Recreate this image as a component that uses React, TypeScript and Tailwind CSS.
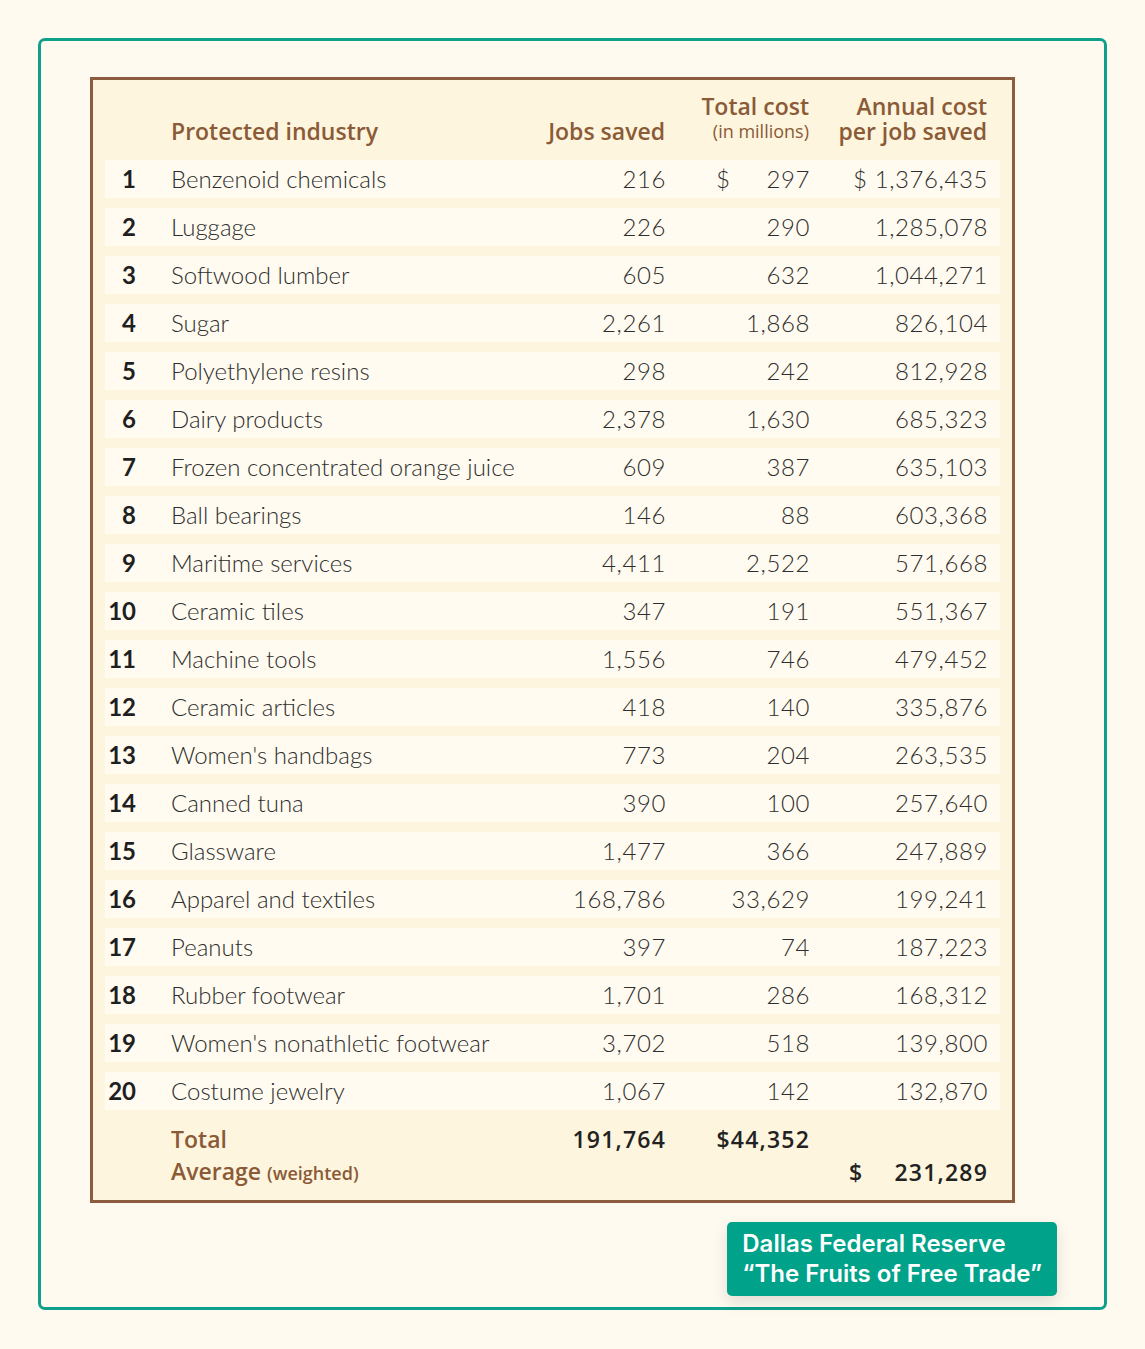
const rows: [string, string, string, string][] = [
    ["Benzenoid chemicals", "216", "297", "$ 1,376,435"],
    ["Luggage", "226", "290", "1,285,078"],
    ["Softwood lumber", "605", "632", "1,044,271"],
    ["Sugar", "2,261", "1,868", "826,104"],
    ["Polyethylene resins", "298", "242", "812,928"],
    ["Dairy products", "2,378", "1,630", "685,323"],
    ["Frozen concentrated orange juice", "609", "387", "635,103"],
    ["Ball bearings", "146", "88", "603,368"],
    ["Maritime services", "4,411", "2,522", "571,668"],
    ["Ceramic tiles", "347", "191", "551,367"],
    ["Machine tools", "1,556", "746", "479,452"],
    ["Ceramic articles", "418", "140", "335,876"],
    ["Women's handbags", "773", "204", "263,535"],
    ["Canned tuna", "390", "100", "257,640"],
    ["Glassware", "1,477", "366", "247,889"],
    ["Apparel and textiles", "168,786", "33,629", "199,241"],
    ["Peanuts", "397", "74", "187,223"],
    ["Rubber footwear", "1,701", "286", "168,312"],
    ["Women's nonathletic footwear", "3,702", "518", "139,800"],
    ["Costume jewelry", "1,067", "142", "132,870"],
];

// number | industry | jobs saved | total cost | annual cost
const cols = "grid grid-cols-[31px_379px_150px_144px_178px]";

function DataRow({ index, row }: { index: number; row: [string, string, string, string] }) {
    const [industry, jobs, total, annual] = row;
    return (
        <div className={`${cols} mb-[10px] h-[38px] items-center bg-[#fffbf0] text-[24px] text-[#2e2e2e]`}>
            <div className="text-right font-bold text-[#1f1f1f]">{index + 1}</div>
            <div className="pl-[35px] font-light whitespace-nowrap">{industry}</div>
            <div className="mr-[-1px] text-right font-light tracking-[0.6px]">{jobs}</div>
            {index === 0 ? (
                <div className="mr-[-1px] flex justify-between pl-[51px] font-light tracking-[0.6px]">
                    <span>$</span>
                    <span>{total}</span>
                </div>
            ) : (
                <div className="mr-[-1px] text-right font-light tracking-[0.6px]">{total}</div>
            )}
            <div className="mr-[-1px] text-right font-light tracking-[0.6px] whitespace-pre">{annual}</div>
        </div>
    );
}

export default function App() {
    return (
        <div className="min-h-[1349px] bg-[#fffaf0] pt-[38px] pl-[38px] font-['Lato',sans-serif]">
            <div className="flex h-[1272px] w-[1069px] flex-col rounded-[7px] border-[3px] border-[#0ea08a]">
                <div className="mt-[36px] ml-[49px] w-[925px] border-[3px] border-[#8b5c3f] bg-[#fdf5de] px-3">
                    {/* header */}
                    <div className={`${cols} items-end pt-[14px] pb-[16px] font-['Open_Sans',sans-serif] text-[23px] leading-[25px] font-semibold whitespace-nowrap text-[#8b5a36]`}>
                        <div />
                        <div className="pl-[35px]">Protected industry</div>
                        <div className="text-right">Jobs saved</div>
                        <div className="flex flex-col items-end">
                            <span>Total cost</span>
                            <span className="text-[18px] font-medium">(in millions)</span>
                        </div>
                        <div className="flex flex-col items-end">
                            <span>Annual cost</span>
                            <span>per job saved</span>
                        </div>
                    </div>

                    {rows.map((row, i) => (
                        <DataRow key={row[0]} index={i} row={row} />
                    ))}

                    {/* totals */}
                    <div className="pt-[3px] pb-[11px] font-['Open_Sans',sans-serif] leading-[32px]">
                        <div className={`${cols} items-center`}>
                            <div />
                            <div className="pl-[35px] text-[23px] font-semibold text-[#8b5a36]">Total</div>
                            <div className="mr-[-1px] text-right text-[23px] font-semibold tracking-[1.2px] text-[#222]">191,764</div>
                            <div className="mr-[-1px] text-right text-[23px] font-semibold tracking-[1.2px] text-[#222]">$44,352</div>
                            <div />
                        </div>
                        <div className={`${cols} items-center`}>
                            <div />
                            <div className="pl-[35px] text-[23px] font-semibold whitespace-nowrap text-[#8b5a36]">
                                Average <span className="text-[18px]">(weighted)</span>
                            </div>
                            <div />
                            <div />
                            <div className="mr-[-1px] flex justify-between pl-[40px] text-[23px] font-semibold tracking-[1.2px] text-[#222]">
                                <span>$</span>
                                <span>231,289</span>
                            </div>
                        </div>
                    </div>
                </div>

                <div className="mt-[19px] mr-[47px] self-end rounded-[5px] bg-[#00a28a] px-[15px] py-[7px] font-['Inter',sans-serif] text-[24px] leading-[30px] font-semibold text-white shadow-[0_6px_16px_rgba(0,0,0,0.12)]">
                    <div>Dallas Federal Reserve</div>
                    <div>“The Fruits of Free Trade”</div>
                </div>
            </div>
        </div>
    );
}
